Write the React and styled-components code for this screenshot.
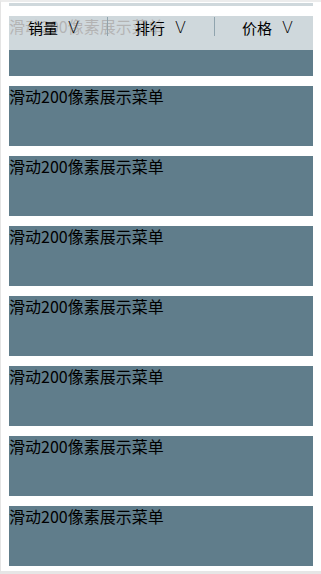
import styled, { createGlobalStyle } from 'styled-components'

const GlobalStyle = createGlobalStyle`
  html, body {
    margin: 0;
    padding: 0;
    background: #fff;
  }
  body {
    font-family: "Noto Sans CJK SC", "Noto Sans", sans-serif;
    overflow: hidden;
  }
`

const Frame = styled.div`
  box-sizing: border-box;
  height: 574px;
  width: 321px;
  border-top: 2px solid #ececec;
  border-left: 1px solid #e4e4e4;
  border-bottom: 3px solid #e6e6e6;
  padding: 1px 8px 0 8px;
  position: relative;
  overflow: hidden;
`

const Tail = styled.div`
  height: 3px;
  background: #cfd8dc;
`

const List = styled.div`
  display: flex;
  flex-direction: column;
  gap: 10px;
  margin-top: 10px;
`

const Item = styled.div`
  height: 60px;
  background: #607d8b;
  color: #000;
  font-size: 16px;
  line-height: 20px;
`

const Bar = styled.div`
  position: absolute;
  top: 14px;
  left: 8px;
  right: 8px;
  height: 34px;
  background: rgba(255, 255, 255, 0.7);
`

const Tabs = styled.div`
  display: grid;
  grid-template-columns: repeat(3, 1fr);
  height: 100%;
  margin: 0 -8px 0 -9px;
`

const Tab = styled.div`
  display: flex;
  align-items: flex-start;
  justify-content: center;
  gap: 10px;
  padding-top: 2px;
  position: relative;
  font-size: 15px;
  line-height: 20px;
  color: #000;

  &::before {
    content: '';
    display: ${p => (p.$first ? 'none' : 'block')};
    position: absolute;
    left: 0;
    top: 1px;
    height: 19px;
    border-left: 1px solid #90a4ae;
  }
`

const Arrow = styled.span`
  font-family: "DejaVu Sans", sans-serif;
  font-size: 16px;
  font-weight: 200;
  line-height: 20px;
`

const tabs = ['销量', '排行', '价格']

export default function App() {
  return (
    <>
      <GlobalStyle />
      <Frame>
        <Tail />
        <List>
          {Array.from({ length: 8 }).map((_, i) => (
            <Item key={i}>滑动200像素展示菜单</Item>
          ))}
        </List>
        <Bar>
          <Tabs>
            {tabs.map((t, i) => (
              <Tab key={t} $first={i === 0}>
                <span>{t}</span>
                <Arrow>V</Arrow>
              </Tab>
            ))}
          </Tabs>
        </Bar>
      </Frame>
    </>
  )
}
